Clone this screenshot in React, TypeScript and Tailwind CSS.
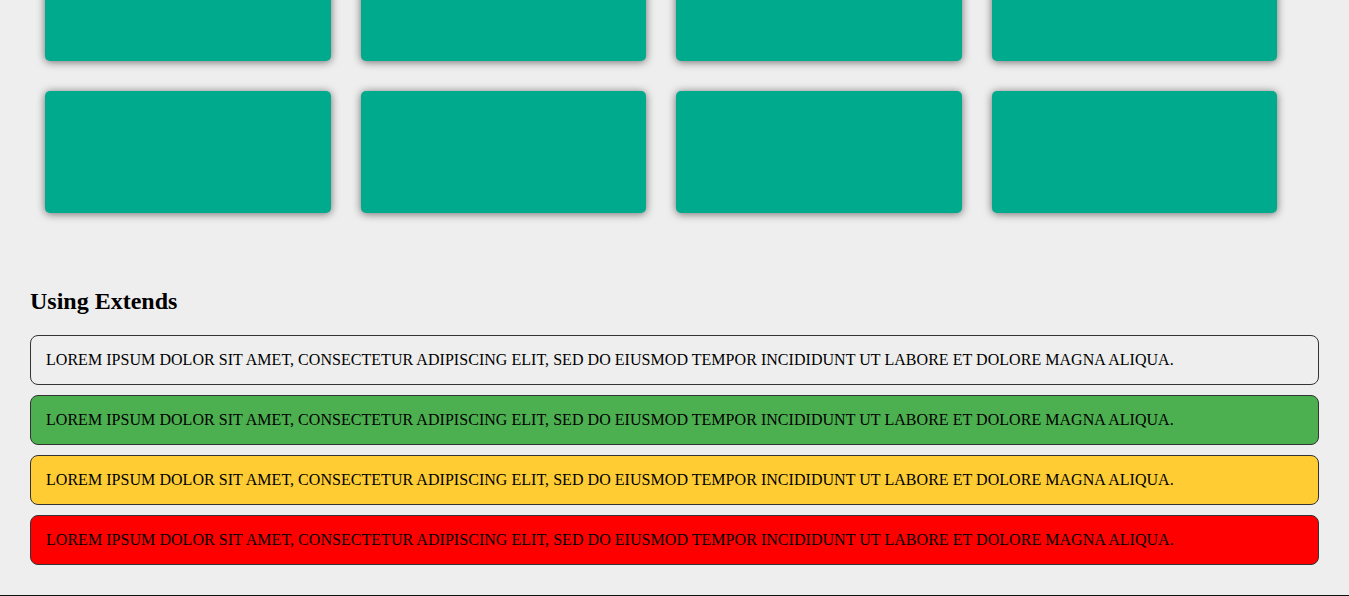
const cards = Array.from({ length: 8 }, (_, i) => i);

const messages = [
  "bg-[#eeeeee]",
  "bg-[#4caf50]",
  "bg-[#ffcc33]",
  "bg-[#ff0000]",
];

const text =
  "Lorem ipsum dolor sit amet, consectetur adipiscing elit, sed do eiusmod tempor incididunt ut labore et dolore magna aliqua.";

export default function App() {
  return (
    <div className="h-[596px] overflow-hidden bg-[#eeeeee] font-['Liberation_Serif',serif] text-black">
      <div className="px-[30px]">
        {/* page is scrolled, so the first card row sits partly above the fold */}
        <div className="-mt-[61px] ml-[15px] grid w-[1232px] grid-cols-4 gap-[30px]">
          {cards.map((c) => (
            <div
              key={c}
              className="h-[122px] rounded-[5px] bg-[#00aa8d] shadow-[0_1px_9px_rgba(0,0,0,0.55)]"
            />
          ))}
        </div>

        <h2 className="mt-[75px] mb-[19px] text-[24px] font-bold leading-[27.6px]">
          Using Extends
        </h2>

        <div className="flex flex-col gap-[10px]">
          {messages.map((bg) => (
            <div
              key={bg}
              className={`${bg} rounded-[8px] border border-[#333333] p-[15px] text-[16px] leading-[18px] tracking-[0.04px] uppercase`}
            >
              {text}
            </div>
          ))}
        </div>
      </div>
      <div className="mt-[30px] h-[20px] bg-[#111111]" />
    </div>
  );
}
